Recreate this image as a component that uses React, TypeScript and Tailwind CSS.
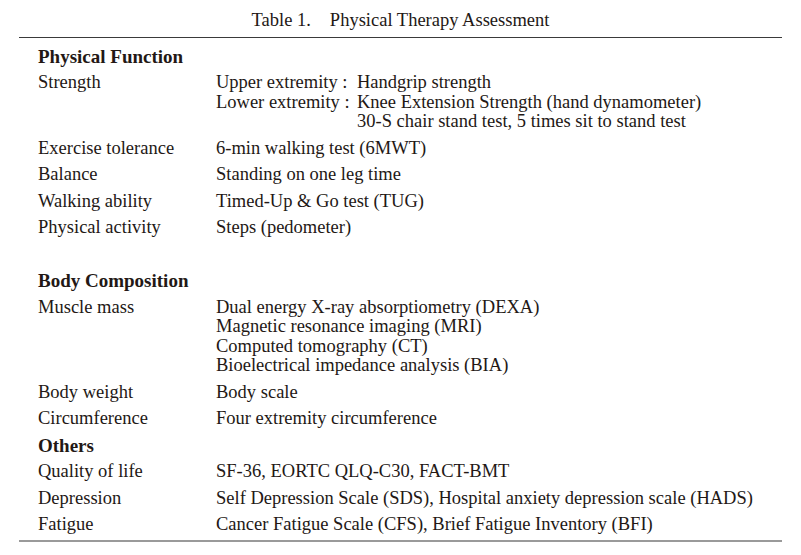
import React from "react";

type Row = { label: string; values: React.ReactNode[] };
type Section = { title: string; rows: Row[]; gapAfter?: boolean };

const sections: Section[] = [
  {
    title: "Physical Function",
    gapAfter: true,
    rows: [
      {
        label: "Strength",
        values: [
          <Sub key="u" head="Upper extremity :" text="Handgrip strength" />,
          <Sub key="l" head="Lower extremity :" text="Knee Extension Strength (hand dynamometer)" />,
          <Sub key="c" head="" text="30-S chair stand test, 5 times sit to stand test" />,
        ],
      },
      { label: "Exercise tolerance", values: ["6-min walking test (6MWT)"] },
      { label: "Balance", values: ["Standing on one leg time"] },
      { label: "Walking ability", values: ["Timed-Up & Go test (TUG)"] },
      { label: "Physical activity", values: ["Steps (pedometer)"] },
    ],
  },
  {
    title: "Body Composition",
    rows: [
      {
        label: "Muscle mass",
        values: [
          "Dual energy X-ray absorptiometry (DEXA)",
          "Magnetic resonance imaging (MRI)",
          "Computed tomography (CT)",
          "Bioelectrical impedance analysis (BIA)",
        ],
      },
      { label: "Body weight", values: ["Body scale"] },
      { label: "Circumference", values: ["Four extremity circumference"] },
    ],
  },
  {
    title: "Others",
    rows: [
      { label: "Quality of life", values: ["SF-36, EORTC QLQ-C30, FACT-BMT"] },
      {
        label: "Depression",
        values: ["Self Depression Scale (SDS), Hospital anxiety depression scale (HADS)"],
      },
      {
        label: "Fatigue",
        values: ["Cancer Fatigue Scale (CFS), Brief Fatigue Inventory (BFI)"],
      },
    ],
  },
];

function Sub({ head, text }: { head: string; text: string }) {
  return (
    <div className="grid grid-cols-[141px_1fr]">
      <span className="whitespace-pre">{head}</span>
      <span>{text}</span>
    </div>
  );
}

export default function App() {
  return (
    <div className="h-[555px] w-[801px] bg-white font-['Liberation_Serif',serif] text-[18.5px] text-[#231815]">
      <div className="pt-[7px] text-center leading-[26px]">
        Table 1.<span className="ml-[19px]">Physical Therapy Assessment</span>
      </div>

      <div className="mx-[19px] mt-[4px] border-t border-[#3a3a3a] pt-[5px] pl-[19px]">
        {sections.map((s) => (
          <div key={s.title} className={s.gapAfter ? "pb-[26.5px]" : ""}>
            <div className="py-[3.5px] text-[19px] font-bold leading-[19.5px]">{s.title}</div>
            {s.rows.map((r) => (
              <div key={r.label} className="grid grid-cols-[178px_1fr] py-[3.5px] leading-[19.5px]">
                <div>{r.label}</div>
                <div className="flex flex-col">
                  {r.values.map((v, i) => (
                    <div key={i}>{v}</div>
                  ))}
                </div>
              </div>
            ))}
          </div>
        ))}
      </div>

      <div className="mx-[19px] mt-[2px] border-t-2 border-[#9a9a9a]" />
    </div>
  );
}
